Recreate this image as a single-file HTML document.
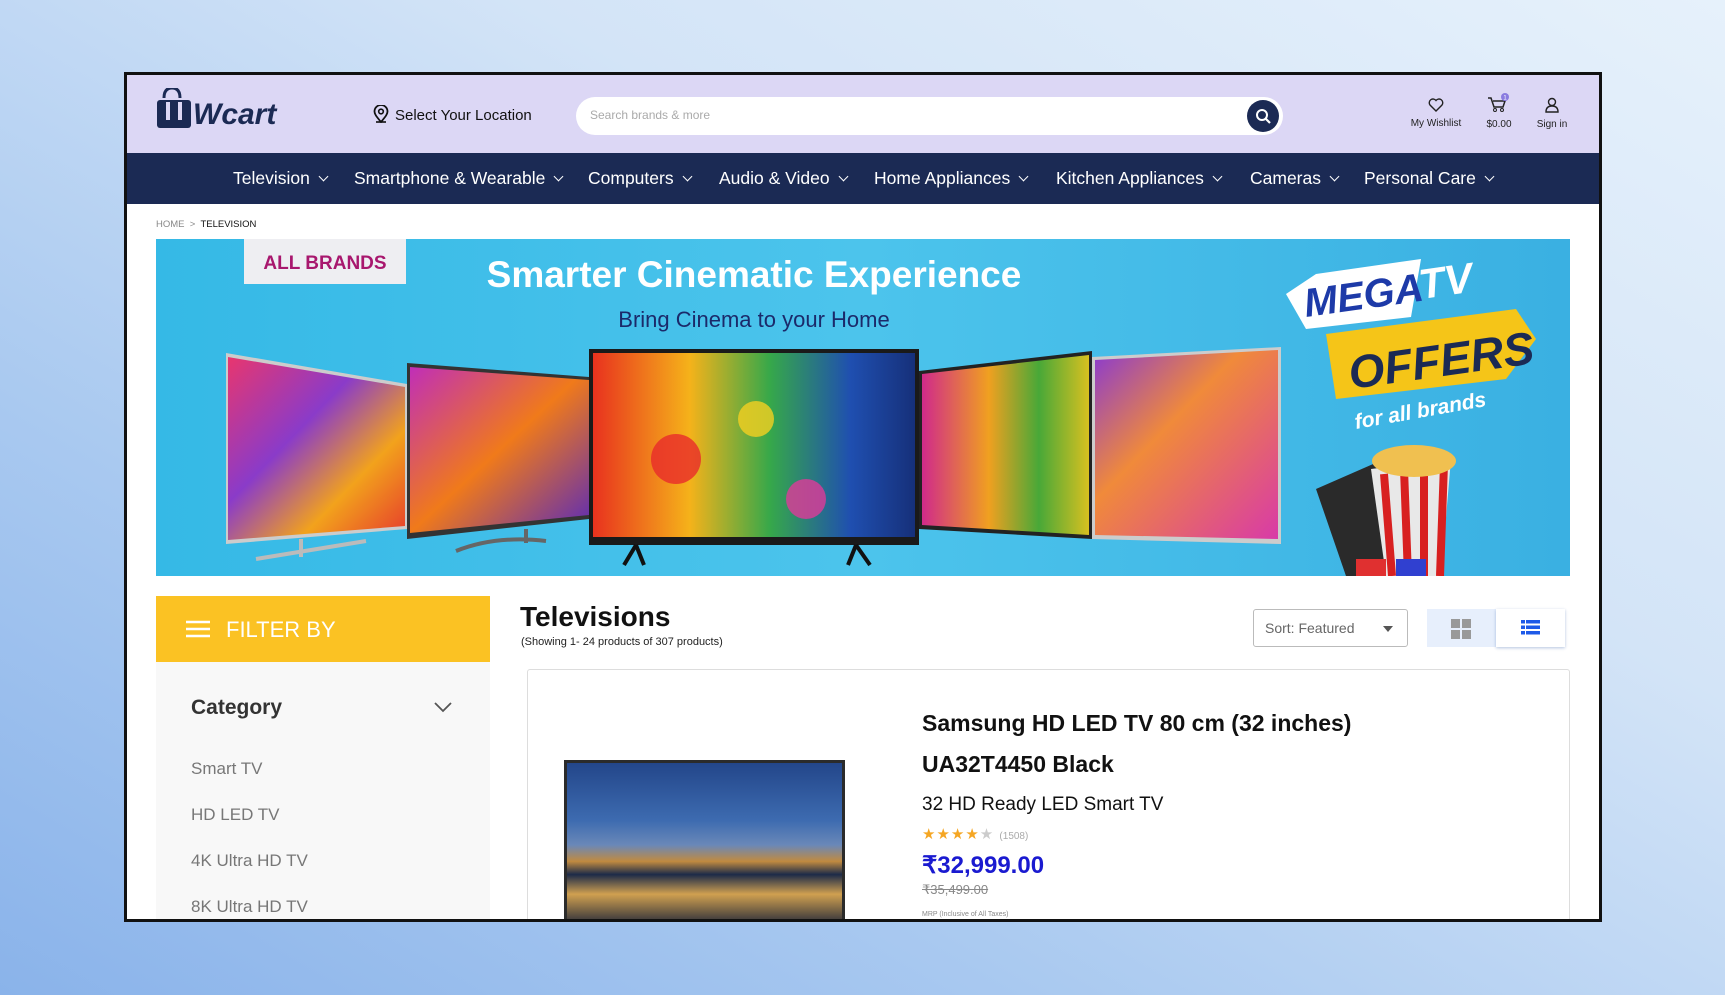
<!DOCTYPE html>
<html><head><meta charset="utf-8"><style>
*{box-sizing:border-box;margin:0;padding:0}
body{width:1725px;height:995px;overflow:hidden;font-family:"Liberation Sans",sans-serif;background:linear-gradient(210deg,#e6f1fb 0%,#d3e4f7 35%,#a9c9f0 70%,#8ab3ea 100%);position:relative}
.frame{position:absolute;left:124px;top:72px;width:1478px;height:850px;border:3px solid #111;background:#fff;overflow:hidden}
.hdr{position:absolute;left:0;top:0;width:100%;height:78px;background:#dcd7f5}
.nav{position:absolute;left:0;top:78px;width:100%;height:51px;background:#1b2a54;color:#fff;font-size:17.5px}
.nav span{position:absolute;top:15px;white-space:nowrap}
.nav span:after{content:"";display:inline-block;width:6px;height:6px;border-right:1.5px solid #fff;border-bottom:1.5px solid #fff;transform:rotate(45deg);margin-left:10px;position:relative;top:-4px}
.abs{position:absolute}
</style></head><body>
<div class="frame">
 <div class="hdr">
  <div class="abs" style="left:27px;top:13px">
   <svg width="130" height="42" viewBox="0 0 130 42"><path d="M10 10 Q10 0 18 0 Q26 0 26 10" fill="none" stroke="#1b2a54" stroke-width="3"/><rect x="3" y="12" width="34" height="28" rx="3" fill="#1b2a54"/><rect x="12" y="14" width="4" height="18" fill="#dcd7f5"/><rect x="24" y="14" width="4" height="18" fill="#dcd7f5"/>
   <text x="39" y="36" font-family="Liberation Sans" font-weight="bold" font-style="italic" font-size="30" fill="#1b2a54">Wcart</text></svg>
  </div>
  <div class="abs" style="left:246px;top:30px;font-size:15px;color:#111">
   <svg width="16" height="18" viewBox="0 0 16 18" style="vertical-align:-3px;margin-right:6px"><path d="M8 17 C3 11 1.5 9 1.5 6.5 A6.5 6.5 0 0 1 14.5 6.5 C14.5 9 13 11 8 17Z" fill="none" stroke="#111" stroke-width="1.8"/><circle cx="8" cy="6.5" r="2.3" fill="none" stroke="#111" stroke-width="1.6"/><path d="M3 17h10" stroke="#111" stroke-width="1.6"/></svg>Select Your Location</div>
  <div class="abs" style="left:449px;top:22px;width:707px;height:38px;background:#fff;border-radius:19px">
   <span class="abs" style="left:14px;top:11px;font-size:12px;color:#aaa">Search brands &amp; more</span>
   <div class="abs" style="right:4px;top:3px;width:32px;height:32px;border-radius:50%;background:#1b2a54">
    <svg width="32" height="32" viewBox="0 0 32 32"><circle cx="15" cy="15" r="5" fill="none" stroke="#fff" stroke-width="2"/><path d="M19 19l4 4" stroke="#fff" stroke-width="2.2"/></svg></div>
  </div>
  <div class="abs" style="left:1279px;top:23px;width:60px;text-align:center;font-size:10px;color:#222;line-height:14px">
   <svg width="16" height="14" viewBox="0 0 16 14"><path d="M8 13 L2 7 A3.3 3.3 0 0 1 8 2.5 A3.3 3.3 0 0 1 14 7Z" fill="none" stroke="#222" stroke-width="1.4"/></svg><br>My Wishlist</div>
  <div class="abs" style="left:1349px;top:18px;width:46px;text-align:center;font-size:10px;color:#222;line-height:14px">
   <svg width="24" height="20" viewBox="0 0 24 20"><path d="M1 5h3l3 9h9l2-6H6" fill="none" stroke="#222" stroke-width="1.5"/><circle cx="8" cy="17" r="1.5" fill="none" stroke="#222"/><circle cx="15" cy="17" r="1.5" fill="none" stroke="#222"/><circle cx="18" cy="4" r="4" fill="#8a7be0"/><text x="18" y="6.5" font-size="6" fill="#fff" text-anchor="middle">1</text></svg><br>$0.00</div>
  <div class="abs" style="left:1405px;top:22px;width:40px;text-align:center;font-size:10px;color:#222;line-height:14px">
   <svg width="14" height="16" viewBox="0 0 14 16"><circle cx="7" cy="5" r="3.5" fill="none" stroke="#222" stroke-width="1.4"/><path d="M1 15 Q1 9 7 9 Q13 9 13 15Z" fill="none" stroke="#222" stroke-width="1.4"/></svg><br>Sign in</div>
 </div>
 <div class="nav">
  <span style="left:106px">Television</span><span style="left:227px">Smartphone &amp; Wearable</span><span style="left:461px">Computers</span><span style="left:592px">Audio &amp; Video</span><span style="left:747px">Home Appliances</span><span style="left:929px">Kitchen Appliances</span><span style="left:1123px">Cameras</span><span style="left:1237px">Personal Care</span>
 </div>
 <div class="abs" style="left:29px;top:144px;font-size:9.5px;color:#888">HOME &nbsp;&gt;&nbsp; <b style="color:#111;font-weight:normal">TELEVISION</b></div>
 <div class="abs" style="left:29px;top:164px;width:1414px;height:337px;overflow:hidden">
  <svg width="1414" height="337" viewBox="0 0 1414 337">
   <defs>
    <linearGradient id="bg" x1="0" y1="0" x2="1" y2="0"><stop offset="0" stop-color="#35b9e6"/><stop offset="0.5" stop-color="#4cc4ec"/><stop offset="1" stop-color="#3ab0e2"/></linearGradient>
    <linearGradient id="s1" x1="0" y1="0" x2="1" y2="1"><stop offset="0" stop-color="#e8366e"/><stop offset="0.4" stop-color="#8a3bc9"/><stop offset="0.7" stop-color="#f2a21c"/><stop offset="1" stop-color="#e63a2c"/></linearGradient>
    <linearGradient id="s2" x1="0" y1="0" x2="1" y2="1"><stop offset="0" stop-color="#c02eb8"/><stop offset="0.5" stop-color="#f07a1a"/><stop offset="1" stop-color="#5a2ab8"/></linearGradient>
    <linearGradient id="s3" x1="0" y1="0" x2="1" y2="0"><stop offset="0" stop-color="#e8321e"/><stop offset="0.3" stop-color="#f5b21a"/><stop offset="0.55" stop-color="#36a84a"/><stop offset="0.8" stop-color="#1f4fb0"/><stop offset="1" stop-color="#16307a"/></linearGradient>
    <linearGradient id="s4" x1="0" y1="0" x2="1" y2="0"><stop offset="0" stop-color="#d02a8a"/><stop offset="0.4" stop-color="#f0a020"/><stop offset="0.7" stop-color="#48a838"/><stop offset="1" stop-color="#d8c020"/></linearGradient>
    <linearGradient id="s5" x1="0" y1="0" x2="1" y2="1"><stop offset="0" stop-color="#8a3ad0"/><stop offset="0.4" stop-color="#f08a3a"/><stop offset="1" stop-color="#d83aa8"/></linearGradient>
   </defs>
   <rect width="1414" height="337" fill="url(#bg)"/>
   <rect x="88" y="0" width="162" height="45" fill="#eeeef2"/>
   <text x="169" y="30" font-size="19" font-weight="bold" fill="#a8176e" text-anchor="middle">ALL BRANDS</text>
   <text x="598" y="48" font-size="37" font-weight="bold" fill="#fff" text-anchor="middle">Smarter Cinematic Experience</text>
   <text x="598" y="88" font-size="22" fill="#1b2a6a" text-anchor="middle">Bring Cinema to your Home</text>
   <polygon points="70,114 251,145 251,290 70,305" fill="#ccc"/><polygon points="72,118 249,148 249,287 72,301" fill="url(#s1)"/>
   <path d="M145 300 v18 M100 320 l110 -18" stroke="#bbb" stroke-width="4"/>
   <polygon points="251,124 433,138 433,280 251,300" fill="#333"/><polygon points="254,128 433,141 433,276 254,294" fill="url(#s2)"/>
   <path d="M370 290 v14 M300 312 q40 -16 90 -10" stroke="#666" stroke-width="4" fill="none"/>
   <polygon points="763,132 936,112 936,300 763,290" fill="#222"/><polygon points="766,135 933,116 933,296 766,286" fill="url(#s4)"/>
   <polygon points="936,118 1125,108 1125,305 936,300" fill="#ccc"/><polygon points="939,121 1122,111 1122,300 939,296" fill="url(#s5)"/>
   <rect x="433" y="110" width="330" height="196" fill="#1a1a1a"/><rect x="437" y="114" width="322" height="184" fill="url(#s3)"/>
   <circle cx="520" cy="220" r="25" fill="#e82a2a" opacity=".8"/><circle cx="650" cy="260" r="20" fill="#e03a9a" opacity=".8"/><circle cx="600" cy="180" r="18" fill="#f5d020" opacity=".8"/>
   <path d="M480 306 l-12 20 M480 306 l8 20 M700 306 l-8 20 M700 306 l14 20" stroke="#111" stroke-width="4"/>
   <polygon points="1130,55 1160,35 1265,20 1255,78 1150,90" fill="#fff"/>
   <text x="1150" y="78" font-size="40" font-weight="bold" font-style="italic" fill="#1d3aa8" transform="rotate(-8 1150 78)">MEGA</text>
   <text x="1265" y="60" font-size="42" font-weight="bold" font-style="italic" fill="#fff" transform="rotate(-8 1265 60)">TV</text>
   <polygon points="1170,95 1360,70 1380,100 1350,140 1180,160" fill="#f5c518"/>
   <text x="1195" y="150" font-size="46" font-weight="bold" font-style="italic" fill="#1b2a54" transform="rotate(-8 1195 150)">OFFERS</text>
   <text x="1200" y="190" font-size="21" font-weight="bold" font-style="italic" fill="#fff" transform="rotate(-10 1200 190)">for all brands</text>
   <polygon points="1160,250 1240,215 1270,337 1190,337" fill="#2a2a2a"/>
   <polygon points="1215,230 1295,220 1285,337 1230,337" fill="#e8e8e8"/>
   <path d="M1228 235 l8 102 M1248 230 l4 107 M1268 228 l0 109 M1288 225 l-4 112" stroke="#d82020" stroke-width="8"/>
   <ellipse cx="1258" cy="222" rx="42" ry="16" fill="#f0c050"/>
   <rect x="1200" y="320" width="30" height="17" fill="#e03030"/><rect x="1240" y="320" width="30" height="17" fill="#3040d0"/>
  </svg>
 </div>
 <div class="abs" style="left:29px;top:521px;width:334px;height:66px;background:#fbc223;color:#fff;font-size:22px">
  <svg class="abs" style="left:30px;top:24px" width="24" height="18" viewBox="0 0 24 18"><path d="M0 2h24M0 9h24M0 16h24" stroke="#fff" stroke-width="2.6"/></svg>
  <span class="abs" style="left:70px;top:21px">FILTER BY</span></div>
 <div class="abs" style="left:29px;top:587px;width:334px;height:270px;background:#f8f8f8">
  <span class="abs" style="left:35px;top:34px;font-size:21px;font-weight:bold;color:#333">Category</span>
  <svg class="abs" style="left:278px;top:40px" width="18" height="11" viewBox="0 0 18 11"><path d="M1 1l8 8 8-8" fill="none" stroke="#555" stroke-width="1.8"/></svg>
  <div class="abs" style="left:35px;top:84px;font-size:17px;color:#777;line-height:46px">Smart TV<br>HD LED TV<br>4K Ultra HD TV<br>8K Ultra HD TV</div>
 </div>
 <div class="abs" style="left:393px;top:526px;font-size:28px;font-weight:bold;color:#111">Televisions</div>
 <div class="abs" style="left:394px;top:561px;font-size:11px;color:#222">(Showing 1- 24 products of 307 products)</div>
 <div class="abs" style="left:1126px;top:534px;width:155px;height:38px;border:1px solid #bbb;border-radius:3px;font-size:14px;color:#666">
  <span class="abs" style="left:11px;top:10px">Sort: Featured</span>
  <span class="abs" style="right:14px;top:16px;border-left:5px solid transparent;border-right:5px solid transparent;border-top:6px solid #555"></span></div>
 <div class="abs" style="left:1300px;top:534px;width:69px;height:38px;background:#e7effc">
  <svg class="abs" style="left:24px;top:10px" width="20" height="20" viewBox="0 0 20 20" fill="#999"><rect width="9" height="9"/><rect x="11" width="9" height="9"/><rect y="11" width="9" height="9"/><rect x="11" y="11" width="9" height="9"/></svg></div>
 <div class="abs" style="left:1369px;top:534px;width:69px;height:38px;background:#fff;box-shadow:0 1px 3px rgba(0,60,150,.3)">
  <svg class="abs" style="left:25px;top:11px" width="19" height="15" viewBox="0 0 19 15" fill="#1e5ae8"><rect width="4" height="3.5"/><rect x="5" width="14" height="3.5"/><rect y="5.5" width="4" height="3.5"/><rect x="5" y="5.5" width="14" height="3.5"/><rect y="11" width="4" height="3.5"/><rect x="5" y="11" width="14" height="3.5"/></svg></div>
 <div class="abs" style="left:400px;top:594px;width:1043px;height:300px;border:1px solid #ddd;border-radius:3px">
  <div class="abs" style="left:36px;top:90px;width:281px;height:170px;background:#2b2b2b;padding:3px">
   <div style="width:100%;height:100%;background:linear-gradient(180deg,#23468a 0%,#3d6bb0 35%,#6a88b8 50%,#c08a40 60%,#1c2a48 68%,#d0a050 80%,#1a2238 100%)"></div></div>
  <div class="abs" style="left:394px;top:33px;font-size:23px;font-weight:bold;color:#111;line-height:41px">Samsung HD LED TV 80 cm (32 inches)<br>UA32T4450 Black</div>
  <div class="abs" style="left:394px;top:124px;font-size:19px;color:#111">32 HD Ready LED Smart TV</div>
  <div class="abs" style="left:394px;top:155px;font-size:15px;color:#f5a623;letter-spacing:1px">★★★★<span style="color:#ccc">★</span> <span style="font-size:10px;color:#aaa;letter-spacing:0">(1508)</span></div>
  <div class="abs" style="left:394px;top:181px;font-size:24px;font-weight:bold;color:#1a1ad0">₹32,999.00</div>
  <div class="abs" style="left:394px;top:212px;font-size:13px;color:#888;text-decoration:line-through">₹35,499.00</div>
  <div class="abs" style="left:394px;top:241px;font-size:7px;color:#888">MRP (Inclusive of All Taxes)</div>
 </div>
</div>
</body></html>
